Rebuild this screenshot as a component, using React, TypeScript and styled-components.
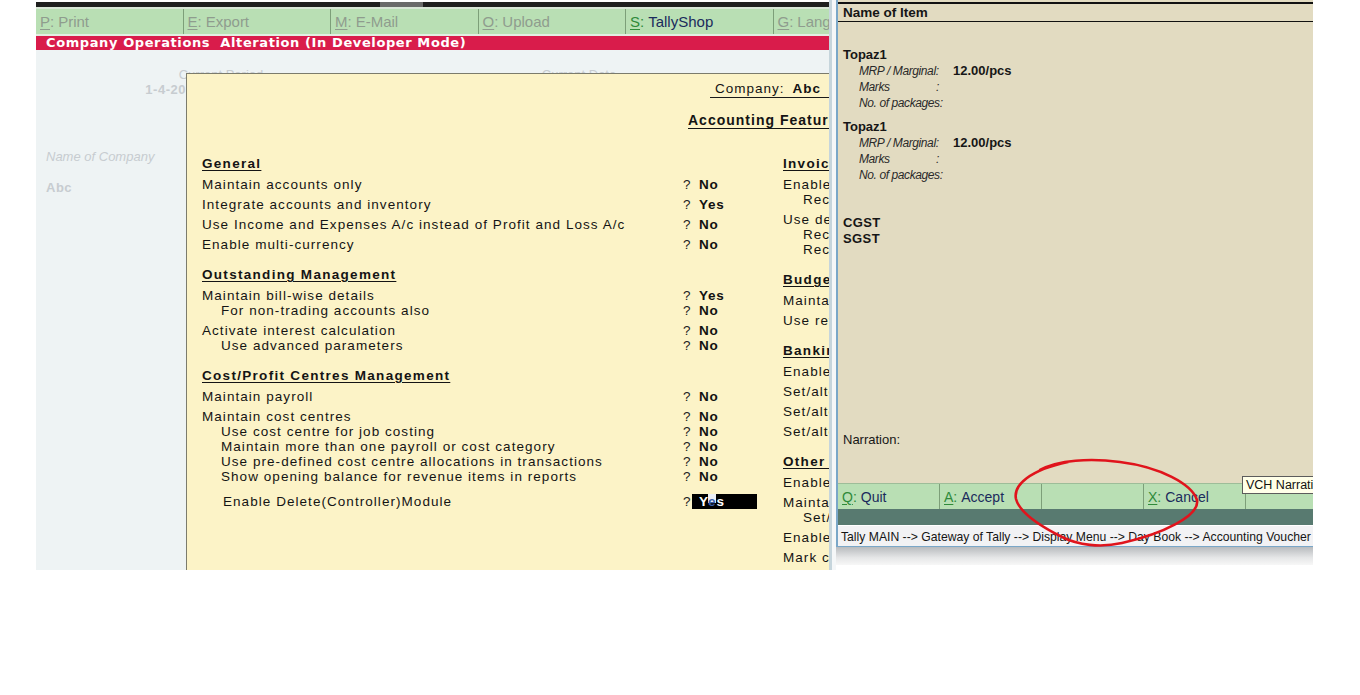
import React from "react";
import styled, { createGlobalStyle } from "styled-components";

const GlobalStyle = createGlobalStyle`
  html, body { margin: 0; padding: 0; background: #ffffff; }
  body { font-family: "Liberation Sans", Arial, sans-serif; }
  * { box-sizing: border-box; }
`;

const Page = styled.div`
  display: flex;
  align-items: flex-start;
  width: 1360px;
  height: 695px;
  padding-left: 36px;
  background: #ffffff;
  overflow: hidden;
`;

/* ---------------- Left screenshot ---------------- */

const LeftShot = styled.div`
  width: 793px;
  height: 570px;
  display: flex;
  flex-direction: column;
  background: #eef3f4;
  overflow: hidden;
`;

const TopStrip = styled.div`
  height: 9px;
  display: flex;
  padding-top: 2px;
  background: linear-gradient(#ffffff 0 2px, #1f1f1f 2px 7px, #d9e7d7 7px);
`;

const Thumb = styled.div`
  margin-left: 344px;
  width: 43px;
  height: 5px;
  background: #6a6a6a;
`;

const FnBar = styled.div<{ $cols: number; $w: number; $h: number }>`
  display: grid;
  grid-template-columns: repeat(${(p) => p.$cols}, ${(p) => p.$w}px);
  height: ${(p) => p.$h}px;
  background: #b9dfb4;
  overflow: hidden;
  flex-shrink: 0;
`;

const TopFnBar = styled(FnBar)`
  border-bottom: 2px solid #e3eee2;
`;

const BottomFnBar = styled(FnBar)`
  border-top: 1px solid #9dbd99;
`;

const FnButton = styled.div<{ $size: number }>`
  display: flex;
  align-items: center;
  padding-left: 4px;
  border-right: 1px solid #7d9f79;
  font-size: ${(p) => p.$size}px;
  white-space: nowrap;
  overflow: hidden;
`;

const FnKey = styled.span<{ $on: boolean }>`
  color: ${(p) => (p.$on ? "#2f8a3a" : "#8f9c8e")};
  text-decoration: underline;
  text-underline-offset: 2px;
`;

const FnColon = styled.span<{ $on: boolean }>`
  color: ${(p) => (p.$on ? "#2f8a3a" : "#8f9c8e")};
  margin-right: 4px;
`;

const FnText = styled.span<{ $on: boolean }>`
  color: ${(p) => (p.$on ? "#1b2b5c" : "#8f9c8e")};
`;

const TitleBar = styled.div`
  height: 14px;
  line-height: 14px;
  padding-left: 10px;
  background: #d91c4b;
  color: #ffffff;
  font-family: "DejaVu Sans", Verdana, sans-serif;
  font-weight: bold;
  font-size: 13px;
  letter-spacing: 0.6px;
  white-space: pre;
  flex-shrink: 0;
`;

const Body = styled.div`
  position: relative;
  flex: 1;
`;

const BgForm = styled.div`
  display: flex;
  flex-direction: column;
  color: #c7ccd0;
  font-size: 13px;
`;

const PeriodRow = styled.div`
  display: flex;
  gap: 158px;
  padding: 17px 0 0 80px;
`;

const PeriodBlock = styled.div`
  width: 200px;
  display: flex;
  flex-direction: column;
  align-items: center;
`;

const FadedLabel = styled.div`
  line-height: 15px;
  white-space: nowrap;
  padding-left: 10px;
`;

const FadedValue = styled.div`
  line-height: 16px;
  font-weight: bold;
  letter-spacing: 0.5px;
  white-space: nowrap;
`;

const NameBlock = styled.div`
  display: flex;
  flex-direction: column;
  padding: 51px 0 0 10px;
  gap: 16px;
`;

const FadedItalic = styled.div`
  font-style: italic;
  line-height: 15px;
`;

const Dialog = styled.div`
  position: absolute;
  top: 23px;
  left: 150px;
  right: 0;
  bottom: 0;
  background: #fcf3c7;
  border-left: 1px solid #7b7b6c;
  border-top: 1px solid #7b7b6c;
  overflow: hidden;
  color: #141414;
`;

const DialogInner = styled.div`
  width: 1100px;
  padding-top: 7px;
  display: flex;
  flex-direction: column;
  align-items: flex-start;
`;

const CompanyLine = styled.div`
  margin-left: 523px;
  width: 170px;
  padding-left: 5px;
  height: 17px;
  line-height: 16px;
  border-bottom: 1px solid #1a1a1a;
  font-size: 13.5px;
  letter-spacing: 1px;
  white-space: nowrap;
`;

const Strong = styled.b`
  margin-left: 8px;
`;

const FormTitle = styled.div`
  margin-left: 501px;
  margin-top: 14px;
  line-height: 16px;
  font-size: 14px;
  font-weight: bold;
  letter-spacing: 1px;
  text-decoration: underline;
  text-underline-offset: 3px;
  white-space: nowrap;
`;

const Columns = styled.div`
  margin-top: 28px;
  padding-left: 15px;
  display: grid;
  grid-template-columns: 581px 500px;
`;

const Section = styled.div`
  display: flex;
  flex-direction: column;
  & + & {
    margin-top: 15px;
  }
`;

const Heading = styled.div`
  line-height: 16px;
  height: 16px;
  font-size: 13.5px;
  font-weight: bold;
  letter-spacing: 1.3px;
  text-decoration: underline;
  text-underline-offset: 2px;
  white-space: nowrap;
  align-self: flex-start;
`;

const Row = styled.div<{ $top: number }>`
  display: grid;
  grid-template-columns: 481px 100px;
  height: 15px;
  line-height: 15px;
  margin-top: ${(p) => p.$top}px;
  white-space: nowrap;
`;

const Label = styled.span<{ $indent: number }>`
  padding-left: ${(p) => p.$indent}px;
  font-size: 13.5px;
  letter-spacing: 1.05px;
`;

const Value = styled.span`
  display: flex;
  font-size: 13.5px;
  letter-spacing: 0.8px;
`;

const Ask = styled.span`
  width: 9px;
  color: #222;
`;

const ValText = styled.b<{ $hl: boolean }>`
  padding-left: 7px;
  width: ${(p) => (p.$hl ? "65px" : "auto")};
  background: ${(p) => (p.$hl ? "#000000" : "transparent")};
  color: ${(p) => (p.$hl ? "#ffffff" : "#111111")};
`;

const Cursor = styled.span`
  color: #3a5ea8;
  background: linear-gradient(#e9eef7 0 58%, transparent 58%);
`;

const Seam = styled.div`
  width: 7px;
  height: 570px;
  background: linear-gradient(to right, #c6d5dc 0 3px, #f5f7f8 3px);
`;

/* ---------------- Right screenshot ---------------- */

const RightShot = styled.div`
  width: 477px;
  display: flex;
  flex-direction: column;
`;

const Window = styled.div`
  position: relative;
  height: 547px;
  display: flex;
  flex-direction: column;
  background: #e2dbc1;
  border-left: 2px solid #7aa7c8;
  overflow: hidden;
  color: #161616;
`;

const ItemHeader = styled.div`
  margin-top: 2px;
  height: 20px;
  border-top: 2px solid #111111;
  border-bottom: 1px solid #111111;
  padding-left: 5px;
  line-height: 17px;
  font-size: 13.5px;
  font-weight: bold;
  flex-shrink: 0;
`;

const ItemList = styled.div`
  display: flex;
  flex-direction: column;
  padding: 25px 0 0 5px;
`;

const ItemBlock = styled.div`
  display: flex;
  flex-direction: column;
  & + & {
    margin-top: 8px;
  }
`;

const ItemName = styled.div`
  line-height: 16px;
  font-size: 13px;
  font-weight: bold;
`;

const Detail = styled.div`
  display: grid;
  grid-template-columns: 77px 17px auto;
  padding-left: 16px;
  line-height: 16px;
  height: 16px;
  white-space: nowrap;
`;

const DetailLabel = styled.span`
  font-size: 12px;
  font-style: italic;
  letter-spacing: -0.4px;
  color: #2a2a2a;
`;

const DetailValue = styled.b`
  font-size: 13px;
`;

const TaxList = styled.div`
  display: flex;
  flex-direction: column;
  padding: 32px 0 0 5px;
`;

const TaxName = styled.div`
  line-height: 16px;
  font-size: 13px;
  font-weight: bold;
  letter-spacing: 0.4px;
`;

const Narration = styled.div`
  margin-top: auto;
  margin-bottom: 35px;
  padding-left: 5px;
  line-height: 16px;
  font-size: 13px;
`;

const DarkBar = styled.div`
  height: 16px;
  background: #587a70;
  flex-shrink: 0;
`;

const Crumbs = styled.div`
  height: 22px;
  line-height: 22px;
  padding-left: 3px;
  background: #f2f2f4;
  border-top: 1px solid #ffffff;
  border-bottom: 1px solid #7aa7c8;
  font-size: 12.2px;
  white-space: nowrap;
  color: #151515;
  flex-shrink: 0;
`;

const Tip = styled.div`
  position: absolute;
  left: 404px;
  top: 476px;
  height: 18px;
  width: 110px;
  padding-left: 3px;
  line-height: 16px;
  background: #ffffe8;
  border: 1px solid #5c5c5c;
  font-size: 12.5px;
  white-space: nowrap;
  color: #111;
`;

const Mark = styled.svg`
  position: absolute;
  left: 0;
  top: 0;
  pointer-events: none;
`;

const BottomStrip = styled.div`
  height: 18px;
  background: linear-gradient(#b8bbbe, #e6e7e8 60%, #f7f7f7);
`;

/* ---------------- Data ---------------- */

type Item = {
  label: string;
  value?: string;
  sub?: boolean;
  indent?: number;
  gap?: number;
  hl?: boolean;
};
type Sec = { title: string; items: Item[] };

const leftSections: Sec[] = [
  {
    title: "General",
    items: [
      { label: "Maintain accounts only", value: "No" },
      { label: "Integrate accounts and inventory", value: "Yes" },
      { label: "Use Income and Expenses A/c instead of Profit and Loss A/c", value: "No" },
      { label: "Enable multi-currency", value: "No" },
    ],
  },
  {
    title: "Outstanding Management",
    items: [
      { label: "Maintain bill-wise details", value: "Yes" },
      { label: "For non-trading accounts also", value: "No", sub: true },
      { label: "Activate interest calculation", value: "No" },
      { label: "Use advanced parameters", value: "No", sub: true },
    ],
  },
  {
    title: "Cost/Profit Centres Management",
    items: [
      { label: "Maintain payroll", value: "No" },
      { label: "Maintain cost centres", value: "No" },
      { label: "Use cost centre for job costing", value: "No", sub: true },
      { label: "Maintain more than one payroll or cost category", value: "No", sub: true },
      { label: "Use pre-defined cost centre allocations in transactions", value: "No", sub: true },
      { label: "Show opening balance for revenue items in reports", value: "No", sub: true },
      { label: "Enable Delete(Controller)Module", value: "Yes", indent: 21, gap: 10, hl: true },
    ],
  },
];

const rightSections: Sec[] = [
  {
    title: "Invoicing",
    items: [
      { label: "Enable invoicing" },
      { label: "Record purchases in invoice mode", sub: true },
      { label: "Use debit/credit notes" },
      { label: "Record credit notes in invoice mode", sub: true },
      { label: "Record debit notes in invoice mode", sub: true },
    ],
  },
  {
    title: "Budgets/Controls",
    items: [
      { label: "Maintain budgets and controls" },
      { label: "Use reversing journals & optional vouchers" },
    ],
  },
  {
    title: "Banking Features",
    items: [
      { label: "Enable cheque printing" },
      { label: "Set/alter banking features" },
      { label: "Set/alter cheque printing configuration" },
      { label: "Set/alter post-dated transactions" },
    ],
  },
  {
    title: "Other Features",
    items: [
      { label: "Enable zero-valued entries" },
      { label: "Maintain multiple mailing details for company and ledgers" },
      { label: "Set/alter company mailing details", sub: true },
      { label: "Enable company logo" },
      { label: "Mark changed vouchers" },
    ],
  },
];

const topButtons = [
  { k: "P", t: "Print", on: false },
  { k: "E", t: "Export", on: false },
  { k: "M", t: "E-Mail", on: false },
  { k: "O", t: "Upload", on: false },
  { k: "S", t: "TallyShop", on: true },
  { k: "G", t: "Language", on: false },
];

const bottomButtons = [
  { k: "Q", t: "Quit" },
  { k: "A", t: "Accept" },
  { k: "", t: "" },
  { k: "X", t: "Cancel" },
  { k: "", t: "" },
];

const items = ["Topaz1", "Topaz1"];

function Sections({ data, subIndent }: { data: Sec[]; subIndent: number }) {
  return (
    <div>
      {data.map((s) => (
        <Section key={s.title}>
          <Heading>{s.title}</Heading>
          {s.items.map((it) => (
            <Row key={it.label} $top={it.sub ? 0 : it.gap ?? 5}>
              <Label $indent={it.indent ?? (it.sub ? subIndent : 0)}>{it.label}</Label>
              {it.value && (
                <Value>
                  <Ask>?</Ask>
                  <ValText $hl={!!it.hl}>
                    {it.hl ? (
                      <>
                        Y<Cursor>e</Cursor>s
                      </>
                    ) : (
                      it.value
                    )}
                  </ValText>
                </Value>
              )}
            </Row>
          ))}
        </Section>
      ))}
    </div>
  );
}

export default function App() {
  return (
    <>
      <GlobalStyle />
      <Page>
        <LeftShot>
          <TopStrip>
            <Thumb />
          </TopStrip>
          <TopFnBar $cols={6} $w={147.5} $h={27}>
            {topButtons.map((b) => (
              <FnButton key={b.k} $size={15}>
                <FnKey $on={b.on}>{b.k}</FnKey>
                <FnColon $on={b.on}>:</FnColon>
                <FnText $on={b.on}>{b.t}</FnText>
              </FnButton>
            ))}
          </TopFnBar>
          <TitleBar>{"Company Operations  Alteration (In Developer Mode)"}</TitleBar>
          <Body>
            <BgForm>
              <PeriodRow>
                <PeriodBlock>
                  <FadedLabel>Current Period</FadedLabel>
                  <FadedValue>1-4-2017 to 31-3-2018</FadedValue>
                </PeriodBlock>
                <PeriodBlock>
                  <FadedLabel>Current Date</FadedLabel>
                  <FadedValue>Saturday, 1-Apr-2017</FadedValue>
                </PeriodBlock>
              </PeriodRow>
              <NameBlock>
                <FadedItalic>Name of Company</FadedItalic>
                <FadedValue>Abc</FadedValue>
              </NameBlock>
            </BgForm>
            <Dialog>
              <DialogInner>
                <CompanyLine>
                  Company:<Strong>Abc</Strong>
                </CompanyLine>
                <FormTitle>Accounting Features</FormTitle>
                <Columns>
                  <Sections data={leftSections} subIndent={19} />
                  <Sections data={rightSections} subIndent={20} />
                </Columns>
              </DialogInner>
            </Dialog>
          </Body>
        </LeftShot>
        <Seam />
        <RightShot>
          <Window>
            <ItemHeader>Name of Item</ItemHeader>
            <ItemList>
              {items.map((n, i) => (
                <ItemBlock key={i}>
                  <ItemName>{n}</ItemName>
                  <Detail>
                    <DetailLabel>MRP / Marginal:</DetailLabel>
                    <span />
                    <DetailValue>12.00/pcs</DetailValue>
                  </Detail>
                  <Detail>
                    <DetailLabel>Marks</DetailLabel>
                    <DetailLabel>:</DetailLabel>
                    <span />
                  </Detail>
                  <Detail>
                    <DetailLabel>No. of packages:</DetailLabel>
                    <span />
                    <span />
                  </Detail>
                </ItemBlock>
              ))}
            </ItemList>
            <TaxList>
              <TaxName>CGST</TaxName>
              <TaxName>SGST</TaxName>
            </TaxList>
            <Narration>Narration:</Narration>
            <BottomFnBar $cols={5} $w={102} $h={26}>
              {bottomButtons.map((b, i) => (
                <FnButton key={i} $size={14}>
                  {b.k && (
                    <>
                      <FnKey $on>{b.k}</FnKey>
                      <FnColon $on>:</FnColon>
                      <FnText $on>{b.t}</FnText>
                    </>
                  )}
                </FnButton>
              ))}
            </BottomFnBar>
            <DarkBar />
            <Crumbs>
              Tally MAIN --&gt; Gateway of Tally --&gt; Display Menu --&gt; Day Book --&gt; Accounting Voucher
            </Crumbs>
            <Tip>VCH Narration</Tip>
            <Mark width="475" height="547" viewBox="838 0 475 547">
              <path
                d="M1040 470 C1058 460, 1090 458, 1120 462 C1160 467, 1192 484, 1197 500 C1200 516, 1162 534, 1122 543 C1100 548, 1078 545, 1062 537 C1042 527, 1020 514, 1016 499 C1013 485, 1030 470, 1068 462"
                fill="none"
                stroke="#e0141c"
                strokeWidth="2.6"
                strokeLinecap="round"
              />
            </Mark>
          </Window>
          <BottomStrip />
        </RightShot>
      </Page>
    </>
  );
}
